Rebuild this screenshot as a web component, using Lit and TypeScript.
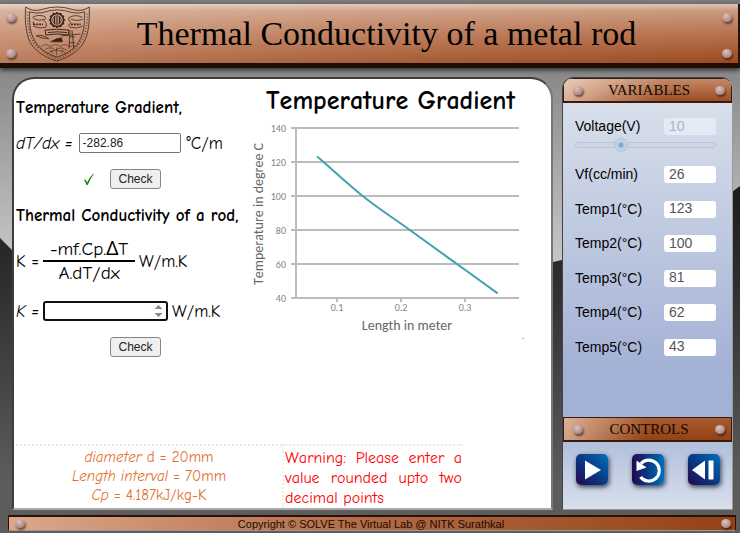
import { LitElement, html, svg, css } from "lit";
import { customElement, property } from "lit/decorators.js";

const PLATE = css`
  .rivet {
    flex: none;
    width: 10px;
    height: 9px;
    border-radius: 50%;
    background: radial-gradient(circle at 40% 30%, #dcc4c0, #b89490 55%, #80605a);
    box-shadow: 1px 2px 2px rgba(40, 15, 5, 0.6);
  }
`;

@customElement("lab-crest")
class LabCrest extends LitElement {
  static styles = css`
    :host { display: block; width: 67px; height: 56px; }
    svg { display: block; width: 100%; height: 100%; }
  `;

  render() {
    const teeth = Array.from({ length: 12 }, (_, i) => {
      const a = (i * Math.PI) / 6;
      return svg`<path d="M${33.5 + 7 * Math.cos(a)} ${14.5 + 7 * Math.sin(a)}L${33.5 + 8.4 * Math.cos(a)} ${14.5 + 8.4 * Math.sin(a)}" stroke-width="1.6"/>`;
    });
    return html`<svg viewBox="0 0 68 58" fill="none" stroke="#33231c" stroke-width="0.8" aria-hidden="true">
      <path d="M1 1Q8 6 16 4Q26 1 33.5 1Q42 1 51 4Q60 6 67 1C67 14 67 24 63 34C58 46 46 53 33.5 57C20 53 9 46 4 34C1 24 0 14 1 1Z"/>
      <path d="M5 6Q11 8 18 7Q27 4 33.5 4Q41 4 50 7Q58 8 62 6C62 17 62 25 58 33C54 43 45 49 33.5 53C22 49 13 43 9 33C5 25 5 17 5 6Z"/>
      <path d="M3 6C3 20 5 30 9 37C14 45 23 50 33.5 55C45 50 53 45 58 37C63 30 65 20 65 6" stroke-width="2" stroke-dasharray="1 2" opacity="0.65"/>
      <circle cx="33.5" cy="14.5" r="6.8" stroke-width="1.6"/>
      <circle cx="33.5" cy="14.5" r="4.4"/>
      <path d="M31 11v7M33.5 10.5v8M36 11v7" stroke-width="1.2"/>
      ${teeth}
      <path d="M8 12Q14 8 21 11Q23 13 20 15Q24 18 22 22Q16 24 9 21M9 13Q14 16 20 14M9 16v4M46 12Q53 8 60 12M46 12Q44 15 48 17Q44 20 47 22Q54 24 60 21M48 14Q54 16 60 14"/>
      <path d="M9 19h10M48 19h10" stroke-width="1.8" stroke-dasharray="2 1"/>
      <path d="M21 25Q33 23 46 25L45 30Q33 28 22 30ZM24 27.5Q33 26 44 27.5" stroke-width="1"/>
      <path d="M12 31Q19 29 25 34L18 33ZM47 25L46 44M49 25L51 44M46 32H52M46 38H52M38 31L58 29"/>
      <path d="M27 37L33 34L38 33L39 37Z" fill="#33231c"/>
      <path d="M17 42Q22 38 27 42Q32 38 37 42Q42 38 47 42Q50 40 52 42M21 45Q28 41 32 46Q37 41 44 46M27 45l2 4M40 45l-2 4M33 43v8M25 48Q33 44 42 48" opacity="0.7"/>
    </svg>`;
  }
}

@customElement("plate-title")
class PlateTitle extends LitElement {
  static styles = [
    PLATE,
    css`
      :host {
        display: flex;
        align-items: center;
        box-sizing: border-box;
        height: 25px;
        padding: 0 6px 0 9px;
        border: 1px solid #3a1a0c;
        border-bottom-width: 2px;
        background: linear-gradient(100deg, rgba(255, 235, 222, 0.65), rgba(255, 235, 222, 0) 60%),
          linear-gradient(#c48a68, #9c4e25);
      }
      :host([lower]) {
        background: linear-gradient(100deg, rgba(255, 235, 222, 0.6), rgba(255, 235, 222, 0) 50%),
          linear-gradient(#a85a30, #944215);
      }
      .label {
        flex: 1;
        margin: 0;
        font: 400 15px/20px "Liberation Serif", serif;
        text-align: center;
        color: #120600;
      }
    `,
  ];

  render() {
    return html`<span class="rivet"></span><h2 class="label"><slot></slot></h2><span class="rivet"></span>`;
  }
}

@customElement("gradient-chart")
class GradientChart extends LitElement {
  @property({ attribute: false }) readings: number[] = [];

  static styles = css`
    :host { display: block; }
    svg { display: block; width: 100%; max-width: 284px; height: auto; }
    text { font-family: Carlito, Calibri, Lato, sans-serif; }
    .tick { font-size: 10px; fill: #848484; }
    .axis { font-size: 14px; fill: #666; }
    .grid { stroke: #bcbcbc; stroke-width: 2; fill: none; }
    .curve { stroke: #3fa3b0; stroke-width: 2; fill: none; stroke-linecap: round; }
  `;

  /** Spline through the points (Catmull-Rom, written as cubic Béziers). */
  private spline(p: number[][]) {
    let d = p.length ? `M${p[0].join(" ")}` : "";
    for (let i = 0; i < p.length - 1; i++) {
      const a = p[i - 1] ?? p[i];
      const b = p[i];
      const c = p[i + 1];
      const e = p[i + 2] ?? c;
      d += `C${b[0] + (c[0] - a[0]) / 6} ${b[1] + (c[1] - a[1]) / 6} ${c[0] - (e[0] - b[0]) / 6} ${c[1] - (e[1] - b[1]) / 6} ${c[0]} ${c[1]}`;
    }
    return d;
  }

  render() {
    const y = (t: number) => 178 - (t - 40) * 1.7;
    const x = (l: number) => 27 + l * 640;
    const pts = this.readings.map((t, i) => [x(0.07 * (i + 1)), y(t)]);
    return html`<svg viewBox="0 0 284 224" role="img" aria-label="Temperature against length">
      ${[140, 120, 100, 80, 60, 40].map(
        (t) => svg`<path class="grid" d="M45 ${y(t)}H273"/>
          <text class="tick" x="40" y=${y(t) + 4} text-anchor="end">${t}</text>`
      )}
      <path class="grid" d="M50 ${y(140)}V${y(40)}"/>
      ${[0.1, 0.2, 0.3].map(
        (l) => svg`<path class="grid" d="M${x(l)} 178v4"/>
          <text class="tick" x=${x(l)} y="191" text-anchor="middle">${l}</text>`
      )}
      <path class="curve" d=${this.spline(pts)}/>
      <text class="axis" x="161" y="210" text-anchor="middle">Length in meter</text>
      <text class="axis" transform="translate(17 94) rotate(-90)" text-anchor="middle">Temperature in degree C</text>
      <text class="tick" x="276" y="219">.</text>
    </svg>`;
  }
}

@customElement("app-root")
class AppRoot extends LitElement {
  private readings = [
    { id: "vf", label: "Vf(cc/min)", value: 26 },
    { id: "t1", label: "Temp1(°C)", value: 123 },
    { id: "t2", label: "Temp2(°C)", value: 100 },
    { id: "t3", label: "Temp3(°C)", value: 81 },
    { id: "t4", label: "Temp4(°C)", value: 62 },
    { id: "t5", label: "Temp5(°C)", value: 43 },
  ];

  static styles = [
    PLATE,
    css`
      :host {
        position: relative;
        display: flex;
        flex-direction: column;
        min-height: 100vh;
        overflow: hidden;
        background: #5c5c5c;
        font-family: "Comic Sans MS", "Comic Neue", "Noto Sans", sans-serif;
        font-size: 17px;
        font-kerning: none;
        font-variant-ligatures: none;
        color: #000;
      }
      * { box-sizing: border-box; }
      .backdrop { position: absolute; inset: 0; width: 100%; height: 100%; }
      .banner, .stage, .foot { position: relative; }

      .banner {
        display: flex;
        align-items: center;
        height: 64px;
        margin-top: 4px;
        padding: 0 6px;
        border-bottom: 5px solid #1f0d04;
        border-right: 2px solid #24130b;
        background: linear-gradient(rgba(255, 255, 255, 0.35), rgba(255, 255, 255, 0) 12%),
          linear-gradient(90deg, rgba(255, 240, 230, 0.3), rgba(255, 240, 230, 0.12) 50%, rgba(255, 240, 230, 0)),
          linear-gradient(#cfa48b, #b87350 50%, #9a4a20);
        box-shadow: 0 2px 5px rgba(0, 0, 0, 0.7);
      }
      .rivets { display: flex; flex-direction: column; gap: 27px; padding-top: 4px; }
      .banner lab-crest { margin-left: 8px; }
      .title {
        flex: 1;
        margin: 0;
        padding-right: 40px;
        font: 400 34px/40px "Liberation Serif", serif;
        text-align: center;
        white-space: nowrap;
      }

      .stage {
        flex: 1;
        display: grid;
        grid-template-columns: minmax(0, 1fr) 171px;
        gap: 9px;
        padding: 9px 7px 0 12px;
      }
      .sheet {
        display: flex;
        flex-direction: column;
        justify-content: space-between;
        padding: 0 2px;
        border: 2px solid #3e3e3e;
        border-right-color: #777;
        border-bottom-color: #aaa;
        border-radius: 22px 22px 0 0;
        background: #fff;
      }
      .work { display: grid; grid-template-columns: 230px minmax(0, 1fr); }
      .steps { display: flex; flex-direction: column; gap: 12px; padding-top: 16px; }
      .row { display: flex; align-items: center; gap: 4px; height: 24px; margin: 0; white-space: nowrap; }
      .head { font-size: 17px; font-weight: 700; }
      .wide { gap: 6px; }
      .act { padding-left: 66px; gap: 14px; }
      .end { padding-left: 94px; }
      .tick { width: 14px; height: 14px; }
      .formula { height: 48px; padding-bottom: 4px; }
      .fraction { display: flex; flex-direction: column; width: 92px; text-align: center; font-size: 19px; line-height: 22px; }
      .over { border-bottom: 2px solid #000; }
      .field {
        width: 102px;
        height: 20px;
        padding: 0 3px;
        border: 1px solid #767676;
        border-radius: 2px;
        background: #fff;
        font: 12px "Liberation Sans", sans-serif;
        color: #222;
      }
      .answer { width: 125px; padding-right: 0; border: 2px solid #101010; border-radius: 3px; outline: none; }
      .answer::-webkit-inner-spin-button { opacity: 1; }
      .check {
        width: 51px;
        height: 20px;
        padding: 0;
        border: 1px solid #858585;
        border-radius: 3px;
        background: #efefef;
        font: 12px "Liberation Sans", sans-serif;
        color: #222;
      }
      .plot { padding-top: 6px; }
      .plot-title { margin: 0 0 3px; padding-left: 20px; font-size: 26px; line-height: 32px; font-weight: 700; white-space: nowrap; }

      .notes { display: grid; grid-template-columns: 266px 180px; min-height: 63px; }
      .notes > * { border-top: 2px dotted #f5e6e6; padding-top: 2px; }
      .facts { font-size: 15px; text-align: center; line-height: 19px; color: #e2702c; }
      .fact { margin: 0; }
      .warning { margin: 0; padding-left: 1px; border-left: 2px dotted #f7ecec; font-size: 16px; line-height: 20px; text-align: justify; color: #f00; }

      .side {
        display: flex;
        flex-direction: column;
        border: 1px solid #444;
        border-right-color: #999;
        border-bottom-color: #999;
        border-radius: 12px 12px 0 0;
        overflow: hidden;
        font: 14px/17px "Liberation Sans", sans-serif;
      }
      .vars {
        flex: 1;
        display: flex;
        flex-direction: column;
        padding: 15px 16px 61px 12px;
        background: linear-gradient(#d8dfeb, #c0cae0 40%, #a3b1d6 85%);
      }
      .var { display: flex; justify-content: space-between; align-items: center; height: 17px; }
      .val {
        width: 52px;
        height: 17px;
        padding: 0 5px 2px;
        border: 0;
        border-radius: 3px;
        background: #fff;
        font: 14px/15px "Liberation Sans", sans-serif;
        color: #555;
      }
      .val:disabled { background: #e4eaf3; color: #aab4c2; }
      .list { flex: 1; display: flex; flex-direction: column; justify-content: space-between; }
      .slider {
        appearance: none;
        width: 100%;
        height: 16px;
        margin: 2px 0 13px;
        background: none;
      }
      .slider::-webkit-slider-runnable-track {
        height: 6px;
        border: 1px solid #bcc6d2;
        border-radius: 3px;
        background: #cdd6e2;
      }
      .slider::-webkit-slider-thumb {
        appearance: none;
        width: 14px;
        height: 14px;
        margin-top: -5px;
        border: 1px solid #a9c4da;
        border-radius: 50%;
        background: radial-gradient(circle, #8da9c0 2px, #b5d0e6 3px, #c6dcec);
      }
      .controls {
        display: flex;
        justify-content: space-between;
        height: 67px;
        padding: 12px 12px 0 13px;
        background: linear-gradient(#b2bfdc, #d8e0ec);
      }
      .ctl {
        width: 32px;
        height: 31px;
        padding: 0;
        border: 0;
        border-radius: 5px;
        background: linear-gradient(45deg, #24084c, #0a3a86 50%, #0070b8);
        box-shadow: 1px 2px 5px rgba(10, 20, 40, 0.8);
      }
      .ctl.back { background: linear-gradient(90deg, #24084c, #0a3a86 50%, #0070b8); }
      .ctl svg { display: block; width: 32px; height: 30px; }

      .foot {
        display: flex;
        align-items: center;
        height: 16px;
        margin: 5px 4px 2px 8px;
        padding: 0 4px 0 6px;
        border: 1px solid #2a1208;
        border-bottom-color: #999;
        border-top-width: 2px;
        background: linear-gradient(90deg, #dba88c, #b26a44 50%, #944215);
      }
      .copy { flex: 1; margin: 0; padding-right: 4px; font: 11px/12px "Liberation Sans", sans-serif; text-align: center; color: #1a0a04; }
    `,
  ];

  render() {
    return html`
      <svg class="backdrop" viewBox="0 0 740 533" preserveAspectRatio="none" aria-hidden="true">
        <defs>
          <linearGradient id="steel" x2="0" y2="1"><stop offset="0" stop-color="#7c7c7c"/><stop offset="0.3" stop-color="#8c8c8c"/><stop offset="1" stop-color="#cacaca"/></linearGradient>
          <linearGradient id="shade" x2="0" y2="1"><stop offset="0" stop-color="#1c1c1c"/><stop offset="0.3" stop-color="#303030"/><stop offset="0.85" stop-color="#5c5c5c"/></linearGradient>
        </defs>
        <rect width="740" height="270" fill="url(#steel)"/>
        <path d="M0 238L12 250Q300 290 553 262Q680 235 740 186V533H0Z" fill="url(#shade)"/>
      </svg>

      <header class="banner">
        <div class="rivets"><span class="rivet"></span><span class="rivet"></span></div>
        <lab-crest></lab-crest>
        <h1 class="title">Thermal Conductivity of a metal rod</h1>
        <div class="rivets"><span class="rivet"></span><span class="rivet"></span></div>
      </header>

      <main class="stage">
        <section class="sheet">
          <div class="work">
            <div class="steps">
              <h3 class="row head">Temperature Gradient,</h3>
              <div class="row wide">
                <label for="grad"><i>dT/dx =</i></label>
                <input id="grad" class="field" type="text" value="-282.86" />
                <span>°C/m</span>
              </div>
              <div class="row act">
                <svg class="tick" viewBox="0 0 14 14" role="img" aria-label="Correct">
                  <path d="M2 8L3.5 7.4L5.2 10.4Q7.5 5 11.5 1.4L12 1.8Q8.300 6.500 5.800 13H4.600Q3.600 10 2 8Z" fill="#0a8a0a"/>
                </svg>
                <button class="check" type="button">Check</button>
              </div>
              <h3 class="row head">Thermal Conductivity of a rod,</h3>
              <div class="row formula">
                <span>K =</span>
                <span class="fraction"><span class="over">-mf.Cp.ΔT</span><span>A.dT/dx</span></span>
                <span>W/m.K</span>
              </div>
              <div class="row">
                <label for="cond"><i>K =</i></label>
                <input id="cond" class="field answer" type="number" />
                <span>W/m.K</span>
              </div>
              <div class="row end"><button class="check" type="button">Check</button></div>
            </div>
            <div class="plot">
              <h2 class="plot-title">Temperature Gradient</h2>
              <gradient-chart .readings=${this.readings.slice(1).map((r) => r.value)}></gradient-chart>
            </div>
          </div>
          <div class="notes">
            <div class="facts">
              <p class="fact"><i>diameter</i> d = 20mm</p>
              <p class="fact"><i>Length interval</i> = 70mm</p>
              <p class="fact"><i>Cp</i> = 4.187kJ/kg-K</p>
            </div>
            <p class="warning">Warning: Please enter a value rounded upto two decimal points</p>
          </div>
        </section>

        <aside class="side">
          <plate-title>VARIABLES</plate-title>
          <div class="vars">
            <div class="var">
              <label for="volt">Voltage(V)</label>
              <input id="volt" class="val" value="10" disabled />
            </div>
            <input class="slider" type="range" min="0" max="100" value="30" aria-label="Voltage" disabled />
            <div class="list">
              ${this.readings.map(
                (r) => html`<div class="var">
                  <label for=${r.id}>${r.label}</label>
                  <input id=${r.id} class="val" .value=${String(r.value)} />
                </div>`
              )}
            </div>
          </div>
          <plate-title lower>CONTROLS</plate-title>
          <div class="controls">
            <button class="ctl" type="button" aria-label="Play">
              <svg viewBox="0 0 32 30"><path d="M9 5.500L25 15L9 24.500Z" fill="#fff"/></svg>
            </button>
            <button class="ctl back" type="button" aria-label="Reset">
              <svg viewBox="0 0 32 30">
                <path d="M9 8.500A10.500 10.500 0 1 1 8.500 22" fill="none" stroke="#fff" stroke-width="3.200"/>
                <path d="M4.500 5.500V16L14.500 12.500Z" fill="#fff"/>
              </svg>
            </button>
            <button class="ctl" type="button" aria-label="Step back">
              <svg viewBox="0 0 32 30"><path d="M4 15L17 5.500V24.500ZM20.500 5.500H25.500V24.500H20.500Z" fill="#fff"/></svg>
            </button>
          </div>
        </aside>
      </main>

      <footer class="foot">
        <span class="rivet"></span>
        <p class="copy">Copyright © SOLVE The Virtual Lab @ NITK Surathkal</p>
        <span class="rivet"></span>
      </footer>
    `;
  }
}
